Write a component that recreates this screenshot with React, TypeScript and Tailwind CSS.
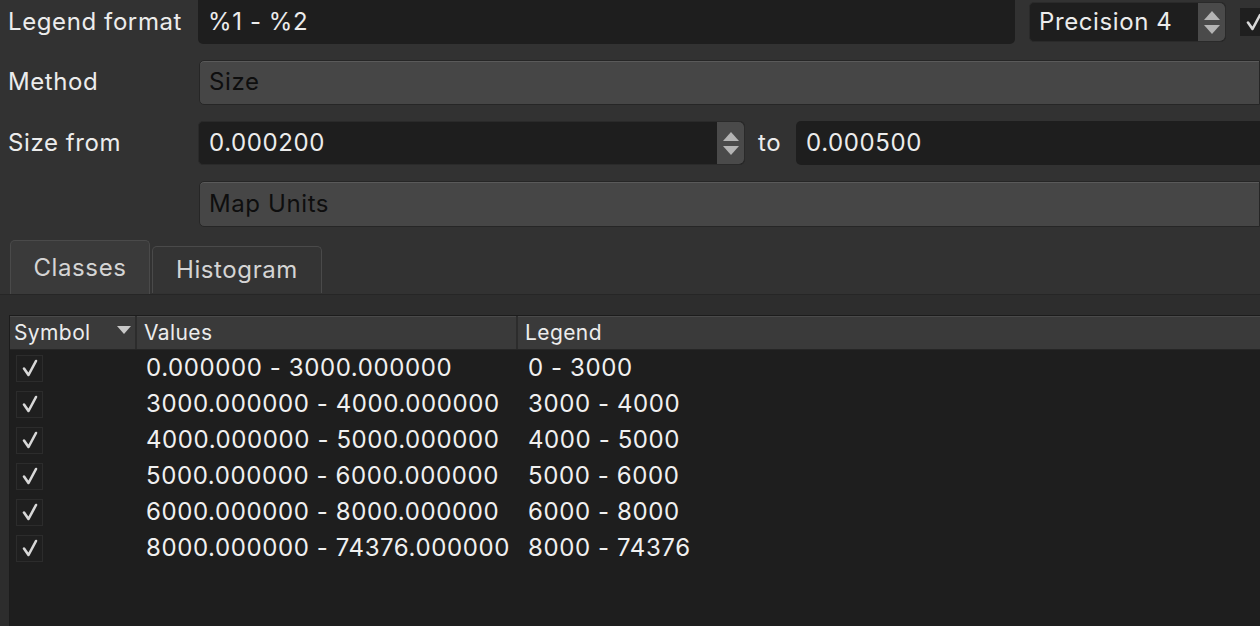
import React from "react";

const Spin = ({ h }: { h: string }) => (
  <div className={`flex w-[27px] shrink-0 ${h} flex-col items-center justify-center gap-[5px] rounded-r-[5px] bg-[#4a4a4a]`}>
    <svg width="16" height="9" viewBox="0 0 16 9"><path d="M8 0 L16 9 L0 9 Z" fill="#b4b4b4" /></svg>
    <svg width="16" height="9" viewBox="0 0 16 9"><path d="M0 0 L16 0 L8 9 Z" fill="#b4b4b4" /></svg>
  </div>
);

const Tick = () => (
  <svg width="18" height="18" viewBox="0 0 18 18">
    <path d="M3 9.5 L7.5 16 L15 2" fill="none" stroke="#d8d8d8" strokeWidth="2.6" strokeLinecap="round" strokeLinejoin="round" />
  </svg>
);

const Check = () => (
  <div className="flex h-[27px] w-[27px] items-center justify-center border border-[#2c2c2c] bg-[#1f1f1f]">
    <Tick />
  </div>
);

const rows = [
  ["0.000000 - 3000.000000", "0 - 3000"],
  ["3000.000000 - 4000.000000", "3000 - 4000"],
  ["4000.000000 - 5000.000000", "4000 - 5000"],
  ["5000.000000 - 6000.000000", "5000 - 6000"],
  ["6000.000000 - 8000.000000", "6000 - 8000"],
  ["8000.000000 - 74376.000000", "8000 - 74376"],
];

export default function App() {
  return (
    <div
      className="relative h-[626px] w-[1260px] overflow-hidden bg-[#323232] text-[24px] tracking-[0.6px] text-[#ececec]"
      style={{ fontFamily: "Inter, 'Noto Sans', sans-serif" }}
    >
      {/* Row 1 */}
      <div className="flex h-[44px] items-center">
        <div className="w-[198px] shrink-0 pl-[8px]">Legend format</div>
        <div className="flex h-[44px] w-[817px] shrink-0 items-center rounded-b-[5px] bg-[#1e1e1e] pl-[10px]">%1 - %2</div>
        <div className="ml-[14px] flex h-[40px] w-[197px] shrink-0 items-center rounded-[5px] border border-[#2a2a2a] bg-[#1e1e1e]">
          <div className="flex-1 pl-[9px]">Precision 4</div>
          <Spin h="h-[38px]" />
        </div>
        <div className="ml-[14px] flex h-[28px] w-[28px] shrink-0 items-center justify-center bg-[#1f1f1f]">
          <Tick />
        </div>
      </div>

      {/* Row 2 */}
      <div className="mt-[16px] flex h-[44px] items-center">
        <div className="w-[199px] shrink-0 pl-[8px]">Method</div>
        <div className="flex h-[45px] flex-1 items-center rounded-l-[5px] border border-[#262626] bg-[#464646] pl-[9px] text-[#0e0e0e] shadow-[inset_0_1px_0_#5a5a5a]">
          Size
        </div>
      </div>

      {/* Row 3 */}
      <div className="mt-[17px] flex h-[44px] items-center">
        <div className="w-[198px] shrink-0 pl-[8px]">Size from</div>
        <div className="flex h-[44px] w-[547px] shrink-0 items-center rounded-[5px] border border-[#2a2a2a] bg-[#1e1e1e]">
          <div className="flex-1 pl-[10px]">0.000200</div>
          <Spin h="h-[42px]" />
        </div>
        <div className="w-[51px] shrink-0 pl-[13px]">to</div>
        <div className="flex h-[44px] flex-1 items-center rounded-l-[5px] bg-[#1e1e1e] pl-[10px]">0.000500</div>
      </div>

      {/* Row 4 */}
      <div className="mt-[16px] flex h-[46px] items-center">
        <div className="w-[199px] shrink-0" />
        <div className="flex h-[46px] flex-1 items-center rounded-l-[5px] border border-[#262626] bg-[#464646] pl-[9px] text-[#0e0e0e] shadow-[inset_0_1px_0_#5a5a5a]">
          Map Units
        </div>
      </div>

      {/* Tabs */}
      <div className="mt-[14px] flex h-[54px] items-end border-b border-[#262626] pl-[10px]">
        <div className="flex h-[54px] w-[140px] items-center justify-center rounded-t-[5px] border border-b-0 border-[#4a4a4a] bg-[#3a3a3a] text-[#d4d4d4]">
          Classes
        </div>
        <div className="ml-[2px] mb-[1px] flex h-[47px] w-[170px] items-center justify-center rounded-t-[5px] border border-b-0 border-[#4a4a4a] bg-[#343434] text-[#d4d4d4]">
          Histogram
        </div>
      </div>

      {/* Pane */}
      <div className="h-[400px] bg-[#2d2d2d] pl-[9px] pt-[20px]">
        <div className="h-full border-l border-t border-[#1c1c1c] bg-[#1e1e1e]">
          {/* Header */}
          <div className="flex h-[34px] items-center border-b border-[#262626] bg-[#3a3a3a] text-[21px] tracking-[0.4px] text-[#ececec] shadow-[inset_0_1px_0_#4a4a4a]">
            <div className="flex h-full w-[127px] items-center justify-between border-r-2 border-[#2c2c2c] pl-[4px] pr-[4px]">
              <span>Symbol</span>
              <svg width="14" height="9" viewBox="0 0 14 9" className="mb-[4px]"><path d="M0 0 L14 0 L7 8 Z" fill="#c8c8c8" /></svg>
            </div>
            <div className="flex h-full w-[381px] items-center border-r-2 border-[#2c2c2c] pl-[7px]">Values</div>
            <div className="flex h-full flex-1 items-center pl-[7px]">Legend</div>
          </div>
          {/* Rows */}
          <div>
            {rows.map(([v, l], i) => (
              <div key={i} className="flex h-[36px] items-center text-[#f0f0f0]">
                <div className="w-[127px] pl-[6px]">
                  <Check />
                </div>
                <div className="w-[383px] pl-[9px]">{v}</div>
                <div className="flex-1 pl-[8px]">{l}</div>
              </div>
            ))}
          </div>
        </div>
      </div>
    </div>
  );
}
